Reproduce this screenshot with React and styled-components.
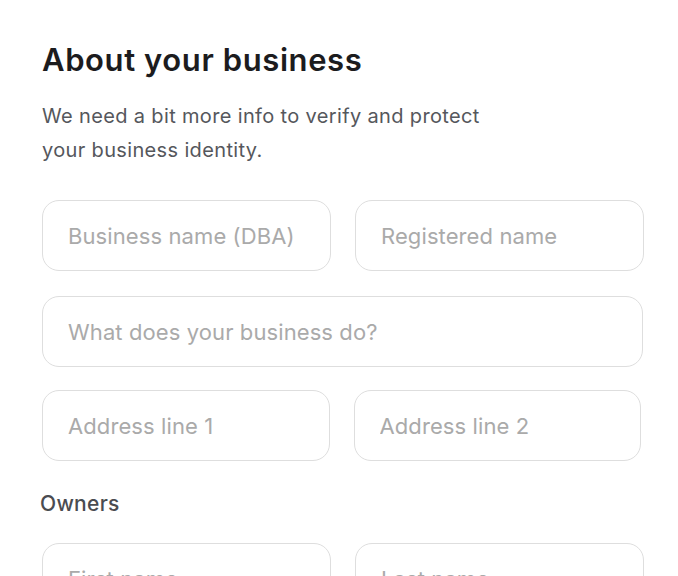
import React from "react";
import styled, { createGlobalStyle } from "styled-components";

const Global = createGlobalStyle`
  html, body { margin: 0; padding: 0; background: #ffffff; }
  body { font-family: "Inter", "Noto Sans", sans-serif; -webkit-font-smoothing: antialiased; }
  * { box-sizing: border-box; }
`;

const Page = styled.div`
  width: 678px;
  height: 576px;
  overflow: hidden;
  padding: 38px 34px 0 42px;
  display: flex;
  flex-direction: column;
`;

const Title = styled.h1`
  margin: 0;
  font-size: 31px;
  line-height: 44px;
  font-weight: 600;
  letter-spacing: 0.6px;
  color: #1c1c1e;
`;

const Lead = styled.p`
  margin: 17px 0 0;
  width: 450px;
  font-size: 20px;
  line-height: 34px;
  font-weight: 400;
  letter-spacing: 0.35px;
  color: #55575c;
`;

const Row = styled.div`
  display: grid;
  grid-template-columns: ${(p) => (p.$single ? "1fr" : "1fr 1fr")};
  column-gap: 24px;
  width: ${(p) => p.$width || 602}px;
  margin-top: ${(p) => p.$top || 24}px;
`;

const Field = styled.input`
  height: 71px;
  width: 100%;
  border: 1.5px solid #dedede;
  border-radius: 17px;
  padding: 0 25px;
  font-family: inherit;
  font-size: 22px;
  letter-spacing: 0.1px;
  color: #333;
  background: #fff;
  outline: none;
  &::placeholder { color: #aaaaaa; }
`;

const Section = styled.h2`
  margin: 29px 0 0 -2px;
  font-size: 21px;
  line-height: 28px;
  font-weight: 500;
  letter-spacing: 0.3px;
  color: #4a4c51;
`;

export default function App() {
  return (
    <>
      <Global />
      <Page>
        <Title>About your business</Title>
        <Lead>We need a bit more info to verify and protect your business identity.</Lead>
        <Row $top={33}>
          <Field placeholder="Business name (DBA)" />
          <Field placeholder="Registered name" />
        </Row>
        <Row $single $width={601} $top={25}>
          <Field placeholder="What does your business do?" />
        </Row>
        <Row $width={599} $top={23}>
          <Field placeholder="Address line 1" />
          <Field placeholder="Address line 2" />
        </Row>
        <Section>Owners</Section>
        <Row $top={25}>
          <Field placeholder="First name" />
          <Field placeholder="Last name" />
        </Row>
      </Page>
    </>
  );
}
